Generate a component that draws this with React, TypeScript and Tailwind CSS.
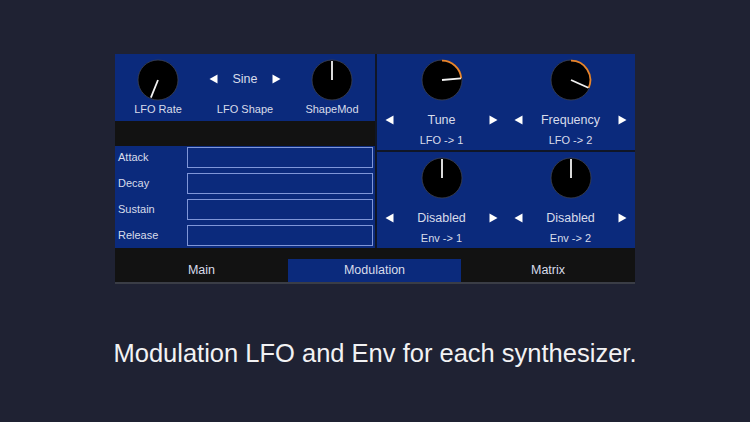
import React from "react";

const FONT = { fontFamily: '"Liberation Sans", Arial, sans-serif' };

function Knob({ angle, arc }: { angle: number; arc?: number }) {
  const c = 21;
  const r = 20;
  const rad = (angle * Math.PI) / 180;
  const x2 = c + 19 * Math.sin(rad);
  const y2 = c - 19 * Math.cos(rad);
  let arcPath = "";
  if (arc) {
    const ar = 19.3;
    const ea = (arc * Math.PI) / 180;
    const ex = c + ar * Math.sin(ea);
    const ey = c - ar * Math.cos(ea);
    arcPath = `M ${c} ${c - ar} A ${ar} ${ar} 0 ${arc > 180 ? 1 : 0} 1 ${ex} ${ey}`;
  }
  return (
    <svg width="42" height="42" viewBox="0 0 42 42">
      <circle cx={c} cy={c} r={r} fill="#000" stroke="#3c4150" strokeWidth="0.8" />
      {arc ? <path d={arcPath} fill="none" stroke="#e8842c" strokeWidth="1.8" /> : null}
      <line x1={c} y1={c} x2={x2} y2={y2} stroke="#f2f2f2" strokeWidth="1.8" />
    </svg>
  );
}

function TriL() {
  return (
    <svg width="9" height="10" viewBox="0 0 9 10">
      <polygon points="8.5,0.5 8.5,9.5 0.5,5" fill="#fff" />
    </svg>
  );
}
function TriR() {
  return (
    <svg width="9" height="10" viewBox="0 0 9 10">
      <polygon points="0.5,0.5 0.5,9.5 8.5,5" fill="#fff" />
    </svg>
  );
}

function ModSlot({ angle, arc, value, label }: { angle: number; arc?: number; value: string; label: string }) {
  return (
    <div className="w-[130px] flex flex-col items-center">
      <div className="mt-[5px]">
        <Knob angle={angle} arc={arc} />
      </div>
      <div className="w-full h-[20px] mt-[9px] flex items-center justify-between px-[8px] text-[12.5px] text-[#d8dcea]">
        <TriL />
        <span>{value}</span>
        <TriR />
      </div>
      <div className="mt-[0px] text-[11px] text-[#d8dcea] leading-[20px]">{label}</div>
    </div>
  );
}

export default function App() {
  const adsr = ["Attack", "Decay", "Sustain", "Release"];
  return (
    <div className="w-[750px] h-[422px] bg-[#1f2233] flex flex-col items-center" style={FONT}>
      <div className="w-[520px] mt-[54px] flex flex-col">
        <div className="flex h-[194px]">
          {/* Left column */}
          <div className="w-[260px] flex flex-col">
            <div className="h-[67px] bg-[#0b2a7c] flex">
              <div className="w-[86px] flex flex-col items-center">
                <div className="mt-[5px]">
                  <Knob angle={202} />
                </div>
                <div className="text-[11px] text-[#d8dcea] leading-[14px] mt-[1px]">LFO Rate</div>
              </div>
              <div className="w-[88px] flex flex-col items-center">
                <div className="w-full h-[20px] mt-[15px] flex items-center justify-between px-[8px] text-[12.5px] text-[#d8dcea]">
                  <TriL />
                  <span>Sine</span>
                  <TriR />
                </div>
                <div className="text-[11px] text-[#d8dcea] leading-[14px] mt-[13px]">LFO Shape</div>
              </div>
              <div className="w-[86px] flex flex-col items-center">
                <div className="mt-[5px]">
                  <Knob angle={0} />
                </div>
                <div className="text-[11px] text-[#d8dcea] leading-[14px] mt-[1px]">ShapeMod</div>
              </div>
            </div>
            <div className="h-[25px] bg-[#121212]" />
            <div className="h-[102px] bg-[#0b2a7c] flex flex-col pt-[1px] gap-[5px]">
              {adsr.map((n) => (
                <div key={n} className="flex items-center h-[21px]">
                  <div className="w-[72px] pl-[3px] text-[11px] text-[#d8dcea]">{n}</div>
                  <div className="w-[186px] h-[21px] border-[1.5px] border-[#7f96d8] bg-[#0b2a7c]" />
                </div>
              ))}
            </div>
          </div>
          {/* Right column */}
          <div className="w-[260px] flex flex-col border-l-2 border-[#101626]">
            <div className="h-[96px] bg-[#0b2a7c] flex">
              <ModSlot angle={85} arc={85} value="Tune" label="LFO -> 1" />
              <ModSlot angle={114} arc={114} value="Frequency" label="LFO -> 2" />
            </div>
            <div className="h-[2px] bg-[#101626]" />
            <div className="h-[96px] bg-[#0b2a7c] flex">
              <ModSlot angle={0} value="Disabled" label="Env -> 1" />
              <ModSlot angle={0} value="Disabled" label="Env -> 2" />
            </div>
          </div>
        </div>
        {/* Tab bar */}
        <div className="h-[34px] bg-[#121212] flex items-end text-[12.5px] text-[#d8dcea]">
          <div className="w-[173px] h-[23px] flex items-center justify-center">Main</div>
          <div className="w-[173px] h-[23px] bg-[#0b2a7c] flex items-center justify-center">Modulation</div>
          <div className="w-[174px] h-[23px] flex items-center justify-center">Matrix</div>
        </div>
        <div className="h-[2px] bg-[#3a3d46]" />
      </div>
      <div className="mt-[52px] text-[25.5px] text-[#f2f2f4] leading-[34px]">
        Modulation LFO and Env for each synthesizer.
      </div>
    </div>
  );
}
